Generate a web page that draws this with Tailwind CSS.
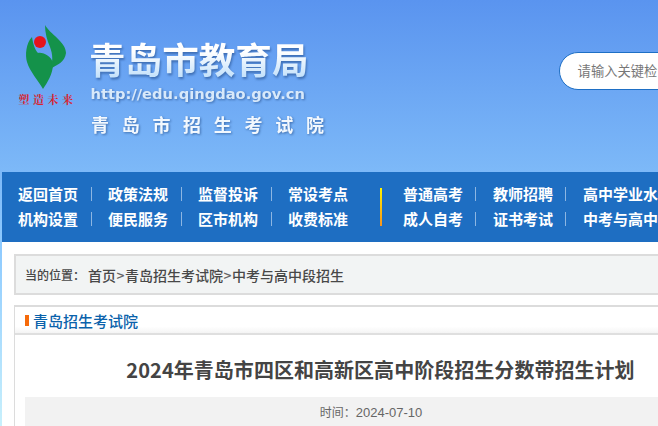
<!DOCTYPE html>
<html lang="zh-CN">
  <head>
    <meta charset="UTF-8" />
    <title>2024年青岛市四区和高新区高中阶段招生分数带招生计划</title>
    <script src="https://cdn.jsdelivr.net/npm/@tailwindcss/browser@4"></script>
  </head>
  <body class="overflow-hidden font-['Noto_Sans_CJK_SC',sans-serif]">
    <div class="w-[658px] h-[426px] overflow-hidden bg-[linear-gradient(180deg,#5a94ef_0px,#7db9f8_172px,#8fcbff_250px,#c8f0fc_426px)]">
      <!-- Header -->
      <header class="flex w-[1000px] h-[172px]">
        <div class="ml-[16px] mt-[22px] w-[60px] flex flex-col items-center">
          <svg width="60" height="70" viewBox="16 22 60 70">
            <path d="M32 37C26 43 25 55 27 62C30 72 38 80 43 89C47 83 53 74 53 64C52 56 43 52 38 53C35 50 33 44 32 37Z" fill="#14924a" />
            <path d="M45 25C50 34 66 42 66 53C65 62 57 65 50 69C53 62 53 55 50 47C47 40 45 33 45 25Z" fill="#14924a" />
            <circle cx="40" cy="42" r="6" fill="#e5141c" />
          </svg>
          <div class="pl-[3px] text-[11px] leading-[14px] tracking-[3.5px] font-bold text-[#d9232e] whitespace-nowrap font-['Noto_Serif_CJK_SC','Noto_Sans_CJK_SC',serif]">塑造未来</div>
        </div>
        <div class="ml-[13px] mt-[34px] flex flex-col">
          <div class="h-[50px]">
            <h1 class="text-[36.6px] leading-[50px] font-bold whitespace-nowrap text-transparent bg-clip-text bg-[linear-gradient(180deg,#ffffff_35%,#c5e2fb_85%)] drop-shadow-[1px_2px_1px_rgba(30,70,130,0.55)]">青岛市教育局</h1>
          </div>
          <div class="ml-[1.5px] text-[14.7px] leading-[20px] font-bold whitespace-nowrap text-[#d8e9fa] font-['DejaVu_Sans',sans-serif] drop-shadow-[1px_1px_1px_rgba(30,70,130,0.6)]">http://edu.qingdao.gov.cn</div>
          <div class="mt-[7px] ml-[2px] text-[18px] leading-[26px] font-bold whitespace-nowrap text-[#f2f8fe] tracking-[12.7px] drop-shadow-[1px_1px_1px_rgba(30,70,130,0.6)]">青岛市招生考试院</div>
        </div>
        <div class="ml-[222px] mt-[52px] w-[300px] h-[38px] bg-white border border-[#1e6fc5] rounded-l-[19px] pl-[18px] text-[13.3px] leading-[36px] text-[#777] whitespace-nowrap">请输入关键检索</div>
      </header>

      <!-- Nav -->
      <nav class="ml-[2px] w-[1000px] h-[70px] bg-[#1e6ec2] flex pl-[16px] pt-[9px] text-[15px] leading-[25px] font-bold text-white whitespace-nowrap">
        <div class="grid grid-cols-[90px_90px_90px_90px] auto-rows-[25px]">
          <div class="flex items-center"><span class="w-[73px]">返回首页</span><i class="w-px h-[14px] bg-[#8db6e2]"></i></div>
          <div class="flex items-center"><span class="w-[73px]">政策法规</span><i class="w-px h-[14px] bg-[#8db6e2]"></i></div>
          <div class="flex items-center"><span class="w-[73px]">监督投诉</span><i class="w-px h-[14px] bg-[#8db6e2]"></i></div>
          <div class="flex items-center"><span>常设考点</span></div>
          <div class="flex items-center"><span class="w-[73px]">机构设置</span><i class="w-px h-[14px] bg-[#8db6e2]"></i></div>
          <div class="flex items-center"><span class="w-[73px]">便民服务</span><i class="w-px h-[14px] bg-[#8db6e2]"></i></div>
          <div class="flex items-center"><span class="w-[73px]">区市机构</span><i class="w-px h-[14px] bg-[#8db6e2]"></i></div>
          <div class="flex items-center"><span>收费标准</span></div>
        </div>
        <div class="ml-[2px] mt-[7px] w-[2px] h-[38px] bg-[linear-gradient(180deg,#fff200,#f7941d)]"></div>
        <div class="ml-[21px] grid grid-cols-[90px_90px_200px] auto-rows-[25px]">
          <div class="flex items-center"><span class="w-[72px]">普通高考</span><i class="w-px h-[14px] bg-[#8db6e2]"></i></div>
          <div class="flex items-center"><span class="w-[72px]">教师招聘</span><i class="w-px h-[14px] bg-[#8db6e2]"></i></div>
          <div class="flex items-center"><span>高中学业水平考试</span></div>
          <div class="flex items-center"><span class="w-[72px]">成人自考</span><i class="w-px h-[14px] bg-[#8db6e2]"></i></div>
          <div class="flex items-center"><span class="w-[72px]">证书考试</span><i class="w-px h-[14px] bg-[#8db6e2]"></i></div>
          <div class="flex items-center"><span>中考与高中段招生</span></div>
        </div>
      </nav>

      <!-- Content -->
      <main class="ml-[2px] w-[1000px] h-[200px] bg-white pl-[12px] pt-[12px]">
        <div class="h-[41px] border-2 border-[#dcdcdc] bg-[#f2f4f4] pl-[9px] pt-[1px] flex items-center text-[14px] text-[#484848] font-medium whitespace-nowrap">
          <span class="text-[12px] w-[63px]">当的位置：</span>
          <span>首页<span class="mx-[0.5px] text-[#666]">&gt;</span>青岛招生考试院<span class="mx-[0.5px] text-[#666]">&gt;</span>中考与高中段招生</span>
        </div>
        <div class="mt-[10px] border-2 border-b-0 border-[#dcdcdc] border-l border-r">
          <div class="h-[28px] flex items-center pl-[10px] pt-[1px] bg-[linear-gradient(180deg,#ffffff_75%,#f4f4f4)] border-b-2 border-[#dfdfdf]">
            <i class="w-[4px] h-[11px] bg-[#f66a0a]"></i>
            <span class="ml-[4px] text-[15px] leading-[20px] font-medium text-[#0a62ab] whitespace-nowrap">青岛招生考试院</span>
          </div>
          <div class="pl-[10px]">
            <h2 class="w-[711px] pt-[21px] h-[62px] text-center text-[20px] leading-[28px] font-bold tracking-[0.04px] text-[#444] whitespace-nowrap">2024年青岛市四区和高新区高中阶段招生分数带招生计划</h2>
            <div class="w-[692px] h-[40px] bg-[#f2f2f2] pt-[6px] text-center text-[12px] leading-[18px] text-[#666] whitespace-nowrap">时间：<span class="text-[13px] font-['Liberation_Sans',sans-serif]">2024-07-10</span></div>
          </div>
        </div>
      </main>
    </div>
  </body>
</html>
